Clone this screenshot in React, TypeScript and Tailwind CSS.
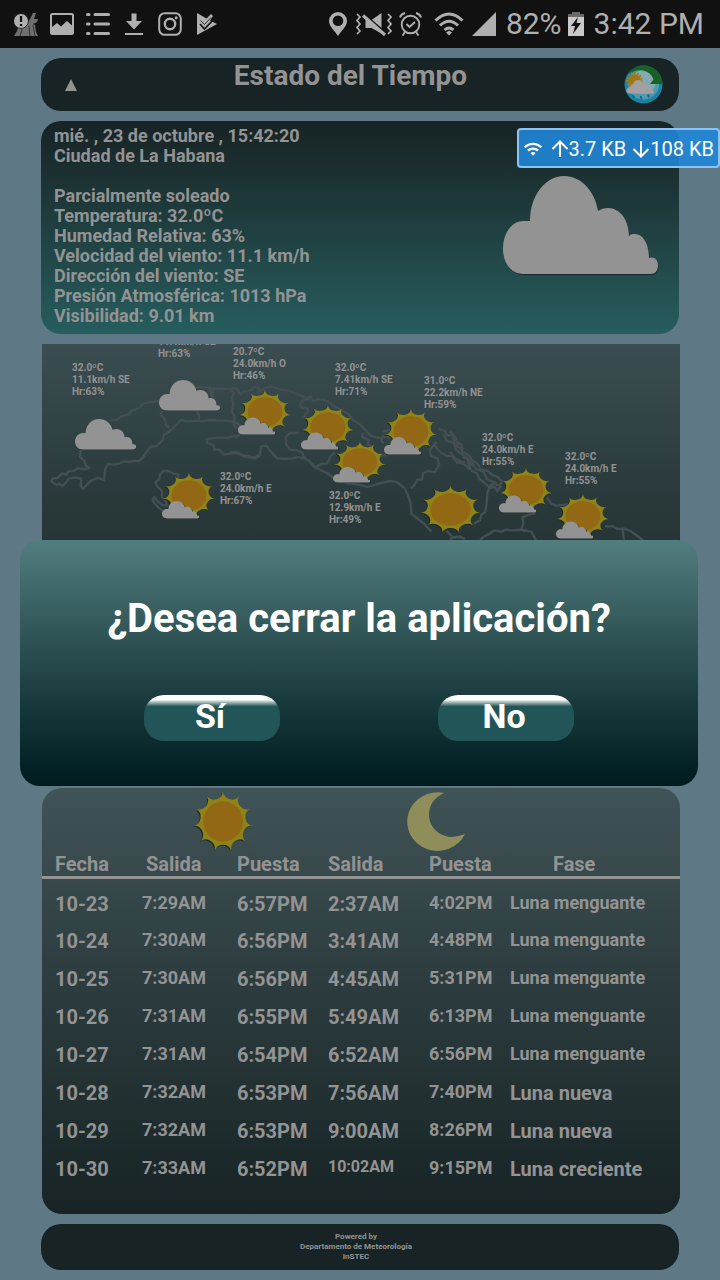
import React from 'react';
import { MdWifi } from 'react-icons/md';

const forecasts = [
  { temp: '32.0ºC', wind: '11.1km/h SE', humidity: 'Hr:63%', place: 'left-[30px] top-[18px]' },
  { temp: '', wind: '11.1km/h SE', humidity: 'Hr:63%', place: 'left-[116px] top-[-8px]' },
  { temp: '20.7ºC', wind: '24.0km/h O', humidity: 'Hr:46%', place: 'left-[191px] top-[2px]' },
  { temp: '32.0ºC', wind: '7.41km/h SE', humidity: 'Hr:71%', place: 'left-[293px] top-[18px]' },
  { temp: '31.0ºC', wind: '22.2km/h NE', humidity: 'Hr:59%', place: 'left-[382px] top-[31px]' },
  { temp: '32.0ºC', wind: '24.0km/h E', humidity: 'Hr:67%', place: 'left-[178px] top-[127px]' },
  { temp: '32.0ºC', wind: '12.9km/h E', humidity: 'Hr:49%', place: 'left-[287px] top-[146px]' },
  { temp: '32.0ºC', wind: '24.0km/h E', humidity: 'Hr:55%', place: 'left-[440px] top-[88px]' },
  { temp: '32.0ºC', wind: '24.0km/h E', humidity: 'Hr:55%', place: 'left-[523px] top-[107px]' },
];

const pins = [
  { kind: 'cloud', place: 'left-[33px] top-[75px] w-[62px] h-[31px]' },
  { kind: 'cloud', place: 'left-[117px] top-[36px] w-[62px] h-[31px]' },
  { kind: 'partly', place: 'left-[196px] top-[45px] w-[54px] h-[46px]' },
  { kind: 'partly', place: 'left-[259px] top-[60px] w-[54px] h-[46px]' },
  { kind: 'partly', place: 'left-[342px] top-[64px] w-[54px] h-[47px]' },
  { kind: 'partly', place: 'left-[291px] top-[97px] w-[54px] h-[42px]' },
  { kind: 'partly', place: 'left-[120px] top-[128px] w-[54px] h-[47px]' },
  { kind: 'partly', place: 'left-[457px] top-[123px] w-[54px] h-[46px]' },
  { kind: 'partly', place: 'left-[514px] top-[149px] w-[54px] h-[46px]' },
  { kind: 'sun', place: 'left-[378px] top-[141px] w-[61px] h-[49px]' },
];

const days = [
  { date: '10-23', sunrise: '7:29AM', sunset: '6:57PM', moonrise: '2:37AM', moonset: '4:02PM', phase: 'Luna menguante' },
  { date: '10-24', sunrise: '7:30AM', sunset: '6:56PM', moonrise: '3:41AM', moonset: '4:48PM', phase: 'Luna menguante' },
  { date: '10-25', sunrise: '7:30AM', sunset: '6:56PM', moonrise: '4:45AM', moonset: '5:31PM', phase: 'Luna menguante' },
  { date: '10-26', sunrise: '7:31AM', sunset: '6:55PM', moonrise: '5:49AM', moonset: '6:13PM', phase: 'Luna menguante' },
  { date: '10-27', sunrise: '7:31AM', sunset: '6:54PM', moonrise: '6:52AM', moonset: '6:56PM', phase: 'Luna menguante' },
  { date: '10-28', sunrise: '7:32AM', sunset: '6:53PM', moonrise: '7:56AM', moonset: '7:40PM', phase: 'Luna nueva' },
  { date: '10-29', sunrise: '7:32AM', sunset: '6:53PM', moonrise: '9:00AM', moonset: '8:26PM', phase: 'Luna nueva' },
  { date: '10-30', sunrise: '7:33AM', sunset: '6:52PM', moonrise: '10:02AM', moonset: '9:15PM', phase: 'Luna creciente' },
];

const SPIKES = 11;

// Eleven spikes joined by inward arcs, centred on 30,30
function spikePath() {
  const point = (step: number) => {
    const angle = (step / SPIKES) * Math.PI * 2 - Math.PI / 2;
    return `${(30 + 29.5 * Math.cos(angle)).toFixed(1)} ${(30 + 29.5 * Math.sin(angle)).toFixed(1)}`;
  };
  let d = `M${point(0)}`;
  for (let i = 1; i <= SPIKES; i++) {
    d += `A9 9 0 0 0 ${point(i)}`;
  }
  return d + 'Z';
}

const SUN_PATH = spikePath();
const CLOUD_PATH =
  'M20 98C8 98 0 87 0 73C0 57 9 45 20 45H27C27 20 42 0 61 0C78 0 92 15 95 35C98 33 101 32 105 32C117 32 126 44 126 60C128 58 130 58 132 58C140 58 146 68 146 82C151 80 155 84 155 89C155 95 152 98 148 98Z';

function SunShape() {
  return (
    <>
      <path d={SUN_PATH} transform="translate(-1 1)" fill="#1c2a2b" />
      <path d={SUN_PATH} fill="#8f8217" />
      <circle cx="30" cy="30" r="19.8" fill="#926815" />
    </>
  );
}

function Sun({ className }: { className: string }) {
  return (
    <svg viewBox="0 0 60 60" preserveAspectRatio="none" className={className} aria-hidden="true">
      <SunShape />
    </svg>
  );
}

function Cloud({ className }: { className: string }) {
  return (
    <svg viewBox="0 0 157 100" preserveAspectRatio="none" className={className} aria-hidden="true">
      <path d={CLOUD_PATH} transform="translate(.5 1)" fill="#1c2a2b" />
      <path d={CLOUD_PATH} fill="#939393" />
    </svg>
  );
}

function PartlyCloudy({ className }: { className: string }) {
  return (
    <svg viewBox="0 0 54 46" preserveAspectRatio="none" className={className} aria-hidden="true">
      <g transform="translate(.5 .5) scale(.88 .75)">
        <SunShape />
      </g>
      <g transform="translate(0 28.5) scale(.24 .173)">
        <path d={CLOUD_PATH} transform="translate(3 4)" fill="#1c2a2b" />
        <path d={CLOUD_PATH} fill="#939393" />
      </g>
    </svg>
  );
}

function CoastLine() {
  return (
    <svg viewBox="0 0 638 196" className="w-full block" fill="none" stroke="#434f52" strokeLinejoin="round" aria-hidden="true">
      <g transform="translate(-12 -9) scale(.3333)" strokeWidth="7">
        <path d="M388 198l-20 2-28 6-14 14-20 6-10 12-22 6-14 10-20 2" />
        <path d="M152 345l-2 20 14 14 2 12 12 8-18 4-16-4-12 8-16 2-8 10-12-4-14 14-14 2-4 8 14 10 10-2 10 6 8-8 10-14 22-4 16 4-2 22 8 8 12-14 12-10 18-8 20 6 2-18 2-16 8-14 18 2 18-4 12-6 18 2 14-4 10 2 14-10 14-22 10-12 18-2 18-18 4-16 14-8 12-10 12-12 14-16 14 6 30-2 20 2 20-4 44 2 22 2 20 6 6 12-2 22-12 10" />
        <path d="M396 228l-4 12 12 12 4 18 10 8M500 228l8 14-2 16M500 156l40 2 4 26 6 2-2-26 50 2 14 12-6 14 4 18-4 24 8 16-2 24 8 12" />
        <path d="M616 302l-20 6-34 0-32 4 2 12 18 6 4 14 14 0 14 14 30-4 18 2 12 8 18 4 18-2 12-8" />
        <path d="M444 430l2-12-16-2-14-8-16 0-10 10-2 14-12 10 6 12 14 14 0 18 12 12 2 14-14-2-14-12-8-12-6 8 6 12 12 12 10 8 22 0" />
      </g>
      <g transform="translate(188 -9) scale(.3333)" strokeWidth="7">
        <path d="M0 160l18 0 14 18 8-8 20-4 14-12 14 6-4 12 22-14 20-4 24 10 24 2 24 10 18 8 14 6 12-6 8 14 14-6 16 2 14 6 18 14 20 10 22 12 16 20 20 12 18 18 14 16 18 6 18 0 10-4 14 6" />
        <path d="M240 192l-22 4-8 12 6 10 14 0 6 12-10 8-4 10M180 294l-12 12 0 22 12 16 22 2 16 8 2 14 18 10 16 18 24 12 20 10 14 12 38 14 30 4 34 8 20-6 26-8 24-4 20 6 20 16 8 16 10 28 2 32 20 16 20 16 20 22" />
        <path d="M0 352l22 0 12 8 24 4 14 6 16-6 6-30 16-2 8 12 12 14 12 12 24 2 20-2 20-4 12 4 10-4M180 294h26M255 396l22-10 14 0 12-24 12-10M400 294l-4 12 22 10-6 12 18 6M460 300l-6 18 8 8M430 350l12 16 26-6" />
        <path d="M480 285l-22 6M620 320l-20 24 2 18 20 8 6 18-14 24-22-4-12 6-4 20-14 0-10 18-10 8" />
        <path d="M625 280l20 8 6 14 16-2 4 14 14 8-4 10 14 12 6 24 14 4-2 12 18 8M612 330l22 24 18 10 12-2 16 20 20 4 20 16M640 296l10 22 22 6 6 20 16 14M650 588l20 20 20-4 14 8" />
      </g>
      <g transform="translate(408 -9) scale(.3333)" strokeWidth="7">
        <path d="M0 290l16 16 4 16 14 6 4 22 20 12 8 14 16 10 12 18 20 4 10 10 22 10 12 14-14 10-12-8-16 12-14-14-14-10-8-18-14-6-12-20M0 352l14 18 22 12 10-2M44 362l20 20 14 20 22 8 12 24 28 10" />
        <path d="M154 452l-12 16-10-14-14 6-6 12-2 34-4 24-12 10-4 16-18 10M290 488l14 18 14 6 36-4M256 535l-20 4-18 8 2 20-6 16 30 8 8 12 8 18" />
        <path d="M90 614l10-8 18-10 16-10 20 4 14-6 22 2 20-2 18 4M465 574l24 0 14 8 18-2 20 8 18 12 20 16M518 584l4 30M0 612l18-6 20 2" />
      </g>
    </svg>
  );
}

function StatusBar() {
  return (
    <div className="h-12 bg-[#111111] text-[#afafaf] flex items-center justify-between pl-3.5 pr-4">
      <div className="flex items-center gap-3">
        <svg viewBox="0 0 24 24" className="w-6 h-6" aria-hidden="true">
          <path d="M15 9l4-8 3 0-2 6h4l-1 3-4 2 2 1 1 7 2 4H0l3-5 2-7z" fill="#6f6f6f" />
          <path d="M8 17l-2 7M15 14l1 10M19 13l2 11" stroke="#333" strokeWidth="1" />
          <circle cx="7" cy="9" r="7.4" fill="#afafaf" stroke="#111" strokeWidth=".8" />
          <path d="M7 4v6M7 12v2" stroke="#111" strokeWidth="2.2" />
        </svg>
        <svg viewBox="0 0 24 24" className="w-6 h-6" aria-hidden="true">
          <rect x="1" y="2" width="22" height="20" rx="1.5" fill="none" stroke="currentColor" strokeWidth="2" />
          <path d="M2 21v-6l5-4 4 3.500 6-5.500 5 4.500V21z" fill="currentColor" />
        </svg>
        <svg viewBox="0 0 24 24" className="w-6 h-6" fill="none" stroke="currentColor" strokeWidth="3" strokeLinecap="round" aria-hidden="true">
          <path d="M1.500 2.500h1.500M1.500 12h1.500M1.500 21.500h1.500M9 2.500h13.500M9 12h13.500M9 21.500h13.500" />
        </svg>
        <svg viewBox="0 0 24 24" className="w-6 h-6" fill="currentColor" aria-hidden="true">
          <path d="M9.500 1.500h5V9h5.500l-8 8.500L4 9h5.500zM3 21h18v2H3z" />
        </svg>
        <svg viewBox="0 0 24 24" className="w-6 h-6" fill="none" stroke="currentColor" strokeWidth="2" aria-hidden="true">
          <rect x="1.200" y="1.200" width="21.600" height="21.600" rx="5.500" />
          <circle cx="12" cy="12" r="5.200" strokeWidth="2.400" />
          <circle cx="18.200" cy="5.800" r="1.500" fill="currentColor" stroke="none" />
        </svg>
        <svg viewBox="0 0 24 24" className="w-6 h-6" aria-hidden="true">
          <path d="M3 1l9.500 5.500L17 2l2 2-3 4.500 7 3.500L3 23z" fill="currentColor" />
          <path d="M6 12l4.500 5L20 7" fill="none" stroke="#111" strokeWidth="1.600" />
          <path d="M6.500 8.500l4 4L17 5.500" fill="none" stroke="#111" strokeWidth=".8" />
        </svg>
      </div>

      <div className="flex items-center">
        <svg viewBox="0 0 24 24" className="w-6 h-6" aria-hidden="true">
          <path d="M12 0a9 9 0 0 0-9 9c0 5.500 6 10 9 15 3-5 9-9.500 9-15a9 9 0 0 0-9-9zm0 14a5.300 5.300 0 1 1 0-10.600A5.300 5.300 0 0 1 12 14z" fill="currentColor" />
        </svg>
        <svg viewBox="0 0 36 24" className="w-9 h-6 ml-1.5" fill="none" stroke="currentColor" strokeWidth="1.700" aria-hidden="true">
          <path d="M1 2l3 3-3 3.500L4 12l-3 3.500L4 19l-3 3M32 2l3 3-3 3.500 3 3.500-3 3.500 3 3.500-3 3" />
          <path d="M9.500 8h6L25.500 1v20.500L15.500 16h-6z" fill="currentColor" stroke="none" />
          <path d="M9.500 3.500l21 18" stroke="#111" strokeWidth="2" />
          <path d="M7 3.500L29 23" strokeWidth="3.200" />
        </svg>
        <svg viewBox="0 0 24 24" className="w-6 h-6 ml-1.5" fill="none" stroke="currentColor" strokeWidth="1.900" aria-hidden="true">
          <circle cx="12.500" cy="12.500" r="8.800" />
          <path d="M8.500 12l3 3 5.500-5M2 5.500Q3 2 7 1M23 5.500Q22 2 18 1M7 20l-2.500 3.500M18 20l2.500 3.500" />
        </svg>
        <svg viewBox="0 0 30 24" className="w-[30px] h-6 ml-3" fill="none" stroke="currentColor" strokeWidth="3" aria-hidden="true">
          <path d="M1.500 8.500Q15-4.500 28.500 8.500M6 13.500Q15 5 24 13.500M10.500 18Q15 14 19.500 18" />
          <path d="M15 18.500l3 2-3 3-3-3z" fill="currentColor" stroke="none" />
        </svg>
        <svg viewBox="0 0 24 24" className="w-6 h-6 ml-2" aria-hidden="true">
          <path d="M24 0v24H0z" fill="currentColor" />
        </svg>
        <span className="ml-2.5 text-[30px] leading-9">82%</span>
        <svg viewBox="0 0 16 24" className="w-4 h-6 ml-1.5" aria-hidden="true">
          <path d="M0 2h4V0h8v2h4v4H0z" fill="#6a6a6a" />
          <path d="M0 5h16v19H0z" fill="#c9c9c9" />
          <path d="M10 5l-7 9h4l-2 8 8-11H8.500z" fill="#111" />
        </svg>
        <span className="ml-2.5 text-[30px] leading-9">3:42 PM</span>
      </div>
    </div>
  );
}

function Logo() {
  return (
    <svg viewBox="0 0 39 39" className="w-[39px] h-[39px]" aria-hidden="true">
      <circle cx="19.500" cy="19.500" r="19" fill="#1883a4" />
      <circle cx="19.500" cy="19" r="15.500" fill="#4f9cae" />
      <circle cx="19.500" cy="17" r="12" fill="#83aab3" />
      <path d="M3 10A19 19 0 0 1 38.500 19H26l3.500-4.500Q27 7 19 5.500 10 4.500 3 10z" fill="#176124" />
      <circle cx="10.500" cy="15.500" r="7.200" fill="none" stroke="#a07d18" strokeWidth="2" strokeDasharray="2 1" />
      <circle cx="10.500" cy="15.500" r="6.200" fill="#a47515" />
      <path d="M5 28.500q-3-.5-2.500-3.500.5-2.500 3.500-2.800 1-3 3.500-3.700 1-3.500 4.500-3.500 4 0 5 3.800 4 .2 5 3.200 6 1 6 6.500z" fill="#a4a0a2" />
      <path d="M9 30l1 3M16.500 31l1 3M24 29.500l1 3" stroke="#176a91" strokeWidth="2" />
    </svg>
  );
}

export default function App() {
  return (
    <div className="relative min-h-screen bg-[#5e7985] text-[#939393] font-[Roboto,'Liberation_Sans',sans-serif]">
      <StatusBar />

      <div className="px-[41px] py-2.5 flex flex-col gap-2.5 font-bold">
        <header className="h-[53px] bg-[#172324] rounded-[20px] flex items-center pl-6 pr-4">
          <button type="button" aria-label="Subir" className="w-3">
            <svg viewBox="0 0 12 12" className="w-3 h-3" aria-hidden="true">
              <path d="M6 0l6 12H0z" fill="currentColor" />
            </svg>
          </button>
          <h1 className="flex-1 self-start pt-0.5 text-center text-[28px] leading-8">Estado del Tiempo</h1>
          <Logo />
        </header>

        <section className="bg-linear-to-b from-[#172324] to-[#265d5e] rounded-[20px] pl-[13px] pr-[19px] pt-[5px] pb-2 flex justify-between text-[18px] leading-5">
          <div>
            <p>mié. , 23 de octubre , 15:42:20</p>
            <p>Ciudad de La Habana</p>
            <p className="mt-5">Parcialmente soleado</p>
            <p>Temperatura: 32.0ºC</p>
            <p>Humedad Relativa: 63%</p>
            <p>Velocidad del viento: 11.1 km/h</p>
            <p>Dirección del viento: SE</p>
            <p>Presión Atmosférica: 1013 hPa</p>
            <p>Visibilidad: 9.01 km</p>
          </div>
          <Cloud className="w-[157px] h-[100px] mt-[50px]" />
        </section>

        <section className="relative ml-px -mr-px h-[434px] overflow-hidden bg-linear-to-b from-[#3a4d50] via-[#263536] via-45% to-[#172324] text-[10px] leading-3">
          <CoastLine />
          {pins.map((pin, idx) => {
            if (pin.kind === 'cloud') return <Cloud key={idx} className={`absolute ${pin.place}`} />;
            if (pin.kind === 'sun') return <Sun key={idx} className={`absolute ${pin.place}`} />;
            return <PartlyCloudy key={idx} className={`absolute ${pin.place}`} />;
          })}
          {forecasts.map((item, idx) => (
            <div key={idx} className={`absolute whitespace-nowrap ${item.place}`}>
              {item.temp && <p>{item.temp}</p>}
              <p>{item.wind}</p>
              <p>{item.humidity}</p>
            </div>
          ))}
        </section>

        <section className="ml-px -mr-px bg-linear-to-b from-[#405356] to-[#172324] rounded-[20px] pt-[3px] pb-8">
          <table className="w-full table-fixed text-left text-[20px] leading-6">
            <colgroup>
              <col className="w-[100px]" />
              <col className="w-[95px]" />
              <col className="w-[91px]" />
              <col className="w-[101px]" />
              <col className="w-[81px]" />
              <col />
            </colgroup>
            <thead>
              <tr>
                <td />
                <th colSpan={2} scope="colgroup" aria-label="Sol" className="pl-[51px]">
                  <Sun className="w-[60px] h-[61px]" />
                </th>
                <th colSpan={2} scope="colgroup" aria-label="Luna" className="pl-[78px]">
                  <svg viewBox="0 0 60 60" className="w-[60px] h-[60px]" aria-hidden="true">
                    <path d="M38 1A30.300 29.300 0 1 0 59 42Q51 45 45 45C32 44 23 34 23 23Q23 8 38 1z" fill="#8f8e5b" />
                  </svg>
                </th>
                <td />
              </tr>
              <tr className="border-b-[3px] border-[#939393]">
                <th scope="col" className="pl-[13px]">Fecha</th>
                <th scope="col" className="pl-1">Salida</th>
                <th scope="col">Puesta</th>
                <th scope="col">Salida</th>
                <th scope="col">Puesta</th>
                <th scope="col" className="pl-[43px]">Fase</th>
              </tr>
            </thead>
            <tbody className="align-top">
              {days.map((day) => (
                <tr key={day.date} className="h-[38px]">
                  <th scope="row" className="pl-[13px] pt-[13px]">{day.date}</th>
                  <td className="pt-[13px] text-[18px] leading-[22px]">{day.sunrise}</td>
                  <td className="pt-[13px]">{day.sunset}</td>
                  <td className={day.moonrise.length > 6 ? 'pt-[13px] text-[16px] leading-5' : 'pt-[13px]'}>{day.moonrise}</td>
                  <td className="pt-[13px] text-[18px] leading-[22px]">{day.moonset}</td>
                  <td className={day.phase === 'Luna menguante' ? 'pt-[13px] text-[18px] leading-[22px]' : 'pt-[13px]'}>{day.phase}</td>
                </tr>
              ))}
            </tbody>
          </table>
        </section>

        <footer className="h-[46px] bg-[#172324] rounded-[20px] pr-2 flex flex-col justify-center text-center text-[8px] leading-[10px]">
          <p>Powered by</p>
          <p>Departamento de Meteorología</p>
          <p>InSTEC</p>
        </footer>
      </div>

      <div className="absolute inset-x-0 top-12 bottom-0 pl-5 pr-[22px] pb-0.5 flex items-center">
        <div role="dialog" aria-labelledby="close-question" className="w-full rounded-[20px] bg-linear-to-b from-[#527d7e] to-[#001b1e] pt-[55px] pb-[45px] text-white font-bold text-center">
          <h2 id="close-question" className="text-[40px] leading-[48px]">¿Desea cerrar la aplicación?</h2>
          <div className="mt-[52px] flex justify-center gap-[158px] text-[34px] leading-10">
            <button type="button" className="w-[136px] h-[46px] pr-1 pb-1 rounded-[20px] bg-linear-to-b from-white from-10% to-[#225557] to-25%">Sí</button>
            <button type="button" className="w-[136px] h-[46px] pr-1 pb-1 rounded-[20px] bg-linear-to-b from-white from-10% to-[#225557] to-25%">No</button>
          </div>
        </div>
      </div>

      <div className="absolute right-0 top-32 h-10 px-1 pt-px flex items-center rounded border-2 border-[#8cc4f5] bg-[#2086d7]/90 text-white text-[20px]">
        <MdWifi className="w-5 h-5 mr-2" />
        <svg viewBox="0 0 18 20" className="w-[18px] h-5" fill="none" stroke="currentColor" strokeWidth="2" aria-hidden="true">
          <path d="M9 18V3M1.500 10L9 2.500l7.500 7.500" />
        </svg>
        <span>3.7 KB</span>
        <svg viewBox="0 0 18 20" className="w-[18px] h-5 ml-1.5" fill="none" stroke="currentColor" strokeWidth="2" aria-hidden="true">
          <path d="M9 2v15M1.500 10L9 17.500l7.500-7.500" />
        </svg>
        <span>108 KB</span>
      </div>
    </div>
  );
}
